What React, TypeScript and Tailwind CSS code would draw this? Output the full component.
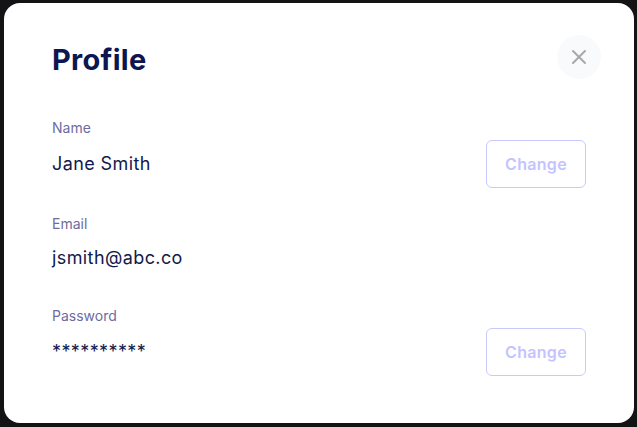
import { X } from "lucide-react";

const fontStack = { fontFamily: "Inter, 'Noto Sans', sans-serif" };

function ChangeButton() {
  return (
    <button className="h-12 w-[100px] rounded-md border border-[#c8c9ff] bg-white text-base font-semibold tracking-[0.3px] text-[#c3c4ff]">
      Change
    </button>
  );
}

export default function App() {
  return (
    <div
      className="flex h-[427px] w-[637px] bg-[#131316] pt-[3px] pl-1"
      style={fontStack}
    >
      <div className="flex h-[420px] w-[630px] flex-col rounded-2xl bg-white pt-8 pr-[33px] pl-12">
        <div className="flex items-start justify-between">
          <h1 className="mt-[7px] text-[29px] leading-9 font-bold tracking-[0.3px] text-[#0c1650]">
            Profile
          </h1>
          <button className="flex h-11 w-11 items-center justify-center rounded-full bg-[#f9fafc] text-[#a8a8ac]">
            <X size={24} strokeWidth={2} />
          </button>
        </div>

        <div className="mt-[39px] pr-[15px]">
          <div className="text-sm leading-5 text-[#6c6ca0]">Name</div>
          <div className="mt-0.5 flex h-12 items-center justify-between">
            <span className="text-lg tracking-[0.4px] text-[#111a4d]">
              Jane Smith
            </span>
            <ChangeButton />
          </div>
        </div>

        <div className="mt-[26px] pr-[15px]">
          <div className="text-sm leading-5 text-[#6c6ca0]">Email</div>
          <div className="mt-1 flex h-10 items-center">
            <span className="text-lg tracking-[0.4px] text-[#111a4d]">
              jsmith@abc.co
            </span>
          </div>
        </div>

        <div className="mt-7 pr-[15px]">
          <div className="text-sm leading-5 text-[#6c6ca0]">Password</div>
          <div className="mt-0.5 flex h-12 items-center justify-between">
            <span className="text-lg tracking-[0.4px] text-[#111a4d]">
              **********
            </span>
            <ChangeButton />
          </div>
        </div>
      </div>
    </div>
  );
}
